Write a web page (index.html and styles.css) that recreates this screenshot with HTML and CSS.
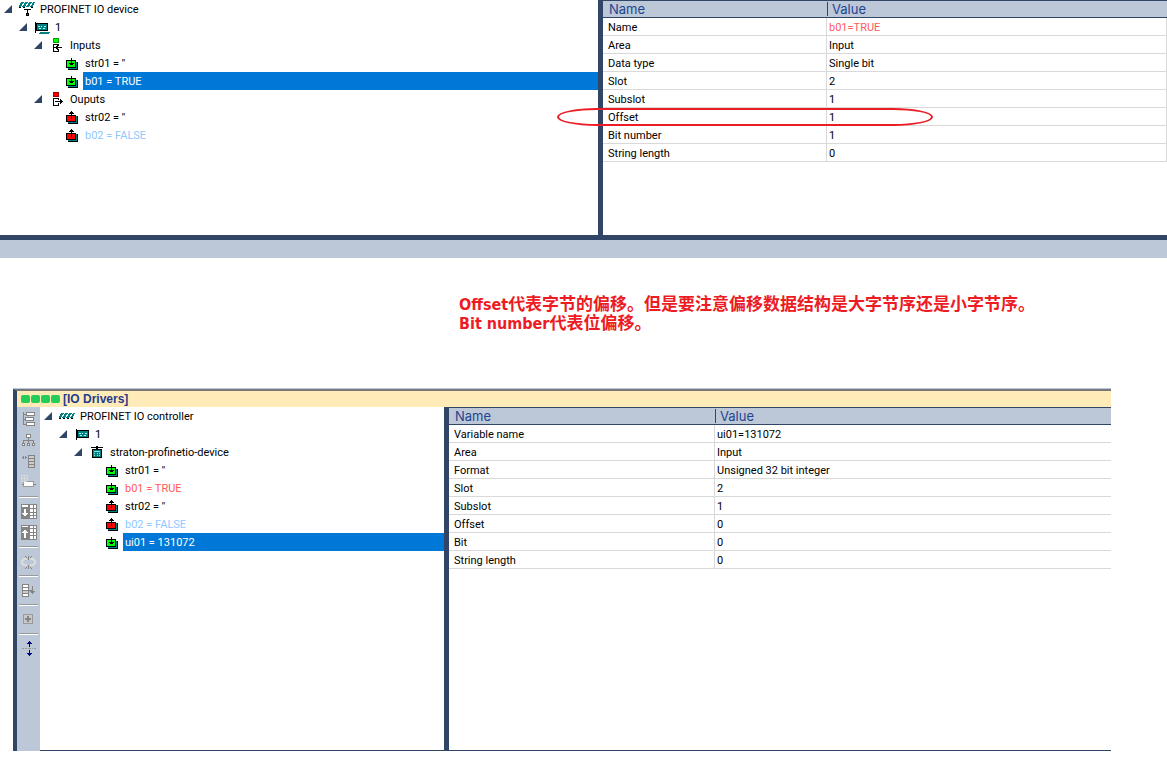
FILE: index.html
```html
<!DOCTYPE html>
<html lang="zh">
<head>
<meta charset="utf-8">
<title>IO Drivers</title>
<link rel="stylesheet" href="styles.css">
</head>
<body>
<svg class="defs" aria-hidden="true">
  <symbol id="i-in" viewBox="0 0 16 16">
    <path fill="#000" d="M4 7h10v8H4z"/><path fill="#008080" d="M4 7h9v7H4z"/>
    <path fill="#000" d="M2 5h10v8H2z"/><path fill="#00ff00" d="M3 6h8v6H3z"/>
    <path fill="#000" d="M7 3h1v7H7zM5 8h5v1H5zM6 9h3v1H6z"/>
  </symbol>
  <symbol id="i-out" viewBox="0 0 16 16">
    <path fill="#000" d="M4 7h10v8H4z"/><path fill="#008080" d="M4 7h9v7H4z"/>
    <path fill="#000" d="M2 6h10v7H2z"/><path fill="#ff0000" d="M3 7h8v5H3z"/>
    <path fill="#000" d="M7 2h1v8H7zM6 3h3v1H6zM5 4h5v1H5z"/>
  </symbol>
  <symbol id="i-net" viewBox="0 0 16 16">
    <path fill="#008080" d="M2 5h14v1h-1v2h-1v2H0V8h1V6h1z"/>
    <path stroke="#fff" d="M2.500 10l3-5M6.500 10l3-5M10.500 10l3-5"/>
    <path fill="#000" d="M0 10h2v1H0zM4 10h2v1H4zM8 10h2v1H8zM12 10h2v1h-2z"/>
  </symbol>
  <symbol id="i-netdev" viewBox="0 0 16 16">
    <path fill="#008080" d="M2 1h14v1h-1v2h-1v2H0V4h1V2h1z"/>
    <path stroke="#fff" d="M2.500 6l3-5M6.500 6l3-5M10.500 6l3-5"/>
    <path fill="#000" d="M0 6h2v1H0zM4 6h2v1H4zM12 6h2v1h-2zM5 8h7v1H5zM8 9h1v3H8zM7 12h3v3H7z"/><path fill="#008080" d="M8 13h1v1H8z"/>
  </symbol>
  <symbol id="i-rack" viewBox="0 0 16 16">
    <path fill="#000" d="M2 3h1v11H2zM3 4h12v8H3z"/><path fill="#008080" d="M4 5h10v6H4z"/>
    <path fill="#9ff" d="M5 7h2v1H5zM8 7h1v1H8zM11 7h2v1h-2zM6 9h2v1H6zM10 9h2v1h-2z"/>
  </symbol>
  <symbol id="i-rackdev" viewBox="0 0 16 16">
    <path fill="#000" d="M1 3h1v11H1zM2 4h12v8H2z"/><path fill="#008080" d="M3 5h10v6H3zM6 13h10v1H6zM5 14h10v1H5z"/>
    <path fill="#9ff" d="M4 7h2v1H4zM7 7h1v1H7zM10 7h2v1h-2zM5 9h2v1H5zM9 9h2v1H9z"/>
  </symbol>
  <symbol id="i-inputs" viewBox="0 0 16 16">
    <path fill="#00a000" d="M4 1h6v5H4z"/><path fill="#00ff00" d="M5 2h4v3H5z"/>
    <path fill="#000" d="M4 7h6v1H5v6h4v-2h1v3H4zM9 7h1v2H9zM5 10h2v1H5zM6 10h7v1H6zM7 9h1v3H7zM8 8h1v5H8z"/>
  </symbol>
  <symbol id="i-outputs" viewBox="0 0 16 16">
    <path fill="#a00000" d="M4 1h6v5H4z"/><path fill="#ff0000" d="M5 2h4v3H5z"/>
    <path fill="#000" d="M4 7h6v1H5v6h4v-2h1v3H4zM9 7h1v2H9zM6 10h8v1H6zM12 9h1v3h-1zM11 8h1v5h-1z"/>
  </symbol>
  <symbol id="i-unit" viewBox="0 0 16 16">
    <path fill="#000" d="M2 3h12v1H2zM7 2h2v3H7zM3 5h10v9H3z"/><path fill="#008080" d="M4 6h8v7H4z"/>
    <path fill="#7fe5e5" d="M5 7h6v1H5zM5 9h1v1H5zM8 9h1v1H8zM10 9h1v1h-1zM5 11h1v1H5zM8 11h1v1H8zM10 11h1v1h-1z"/>
  </symbol>
</svg>

<section class="device">
  <ul class="tree" role="tree" aria-label="PROFINET IO device">
    <li>
      <div class="node"><button class="toggle" aria-label="Collapse"></button><svg class="ico"><use href="#i-netdev"/></svg><span class="label">PROFINET IO device</span></div>
      <ul>
        <li>
          <div class="node"><button class="toggle" aria-label="Collapse"></button><svg class="ico"><use href="#i-rackdev"/></svg><span class="label">1</span></div>
          <ul>
            <li>
              <div class="node"><button class="toggle" aria-label="Collapse"></button><svg class="ico"><use href="#i-inputs"/></svg><span class="label">Inputs</span></div>
              <ul>
                <li class="node leaf"><svg class="ico"><use href="#i-in"/></svg><span class="label">str01 = ''</span></li>
                <li class="node leaf"><svg class="ico"><use href="#i-in"/></svg><span class="label selected">b01 = TRUE</span></li>
              </ul>
            </li>
            <li>
              <div class="node"><button class="toggle" aria-label="Collapse"></button><svg class="ico"><use href="#i-outputs"/></svg><span class="label">Ouputs</span></div>
              <ul>
                <li class="node leaf"><svg class="ico"><use href="#i-out"/></svg><span class="label">str02 = ''</span></li>
                <li class="node leaf"><svg class="ico"><use href="#i-out"/></svg><span class="label false">b02 = FALSE</span></li>
              </ul>
            </li>
          </ul>
        </li>
      </ul>
    </li>
  </ul>
  <div class="props">
    <table>
      <colgroup><col class="key-col"><col></colgroup>
      <thead><tr><th>Name</th><th>Value</th></tr></thead>
      <tbody>
        <tr><td>Name</td><td class="true">b01=TRUE</td></tr>
        <tr><td>Area</td><td>Input</td></tr>
        <tr><td>Data type</td><td>Single bit</td></tr>
        <tr><td>Slot</td><td>2</td></tr>
        <tr><td>Subslot</td><td>1</td></tr>
        <tr><td>Offset</td><td>1</td></tr>
        <tr><td>Bit number</td><td>1</td></tr>
        <tr><td>String length</td><td>0</td></tr>
      </tbody>
    </table>
    <div class="ring"></div>
  </div>
</section>
<div class="strip"></div>

<p class="note"><span class="latin">Offset</span>代表字节的偏移。但是要注意偏移数据结构是大字节序还是小字节序。<br><span class="latin">Bit number</span>代表位偏移。</p>

<section class="drivers">
  <header class="title"><i class="dot"></i><i class="dot"></i><i class="dot"></i><i class="dot"></i><h1>[IO Drivers]</h1></header>
  <div class="body">
    <div class="toolbar" role="toolbar">
      <button aria-label="Insert master"><svg viewBox="0 0 17 17"><path fill="#848484" d="M3 1h1v13H3zM4 3h2v1H4zM4 8h2v1H4zM4 13h2v1H4z"/><path fill="#fff" stroke="#848484" d="M6.500 1.500h8v3h-8zM5.500 6.500h8v3h-8zM6.500 11.500h8v3h-8z"/></svg></button>
      <button aria-label="Insert network"><svg viewBox="0 0 17 17"><path fill="#848484" d="M8 6h1v5H8zM3 8h11v1H3zM3 8h1v3H3zM13 8h1v3h-1z"/><path fill="#fff" stroke="#848484" d="M6.500 2.500h4v3h-4zM2.500 11.500h2v2h-2zM7.500 11.500h2v2h-2zM12.500 11.500h2v2h-2z"/></svg></button>
      <button aria-label="Insert slot"><svg viewBox="0 0 17 17"><path fill="#848484" d="M2 4h2v1H2zM3 3h1v3H3zM5 3h1v3H5zM6 4h1v1H6zM8 2h7v13H8z"/><path fill="#ccc" d="M9 3h5v2H9zM9 6h5v2H9zM9 9h5v2H9zM9 12h5v2H9z"/></svg></button>
      <button aria-label="Insert variable"><svg viewBox="0 0 17 17"><path fill="#848484" d="M2 10h2v1H2zM14 10h2v1h-2z"/><path fill="#fff" stroke="#999" d="M3.500 7.500h10v5h-10z"/><path fill="none" stroke="#d8d8d8" d="M1 1.500h7M1 4.500h7M1 7.500h6M1.500 1v7M4.500 1v7M7.500 1v6"/></svg></button>
      <hr>
      <button aria-label="Import"><svg viewBox="0 0 17 17"><path fill="#848484" d="M1 1h16v15H1z"/><path fill="#fff" d="M2 2h6v2H2zM10 2h3v3h-3zM14 2h2v3h-2zM10 6h3v3h-3zM14 6h2v3h-2zM10 10h3v2h-3zM14 10h2v2h-2zM10 13h3v2h-3zM14 13h2v2h-2zM4 6h2v4h2l-3 4-3-4h2z"/></svg></button>
      <button aria-label="Export"><svg viewBox="0 0 17 17"><path fill="#848484" d="M1 1h16v15H1z"/><path fill="#fff" d="M2 2h6v1H2zM10 2h3v2h-3zM14 2h2v2h-2zM10 5h3v3h-3zM14 5h2v3h-2zM10 9h3v2h-3zM14 9h2v2h-2zM10 12h3v3h-3zM14 12h2v3h-2zM4 14V9H2l3-4 3 4H6v5z"/></svg></button>
      <hr>
      <button aria-label="Disconnect"><svg viewBox="0 0 17 17"><path fill="none" stroke="#dcdcdc" stroke-width="2" d="M7 6H4L2 8v2l2 2h3M10 6h3l2 2v2l-2 2h-3"/><path fill="#848484" d="M8 3h1v4H8zM8 12h1v4H8zM5 3h1v1H5zM6 4h1v1H6zM11 3h1v1h-1zM10 4h1v1h-1zM5 15h1v1H5zM6 14h1v1H6zM11 15h1v1h-1zM10 14h1v1h-1z"/></svg></button>
      <hr>
      <button aria-label="Sort"><svg viewBox="0 0 17 17"><path fill="#848484" d="M2 2h7v13H2zM9 8h3v1H9zM12 4h1v8h-1zM10 9h5v1h-5zM11 10h3v1h-3z"/><path fill="#fff" d="M3 3h5v2H3zM3 6h5v2H3zM3 12h5v2H3z"/><path fill="#ccc" d="M3 9h5v2H3z"/></svg></button>
      <hr>
      <button aria-label="Expand"><svg viewBox="0 0 17 17"><path fill="#c8c8c8" stroke="#999" d="M3.500 3.500h9v9h-9z"/><path fill="#848484" d="M7 5h2v6H7zM5 7h6v2H5z"/></svg></button>
      <hr>
      <button aria-label="Move"><svg viewBox="0 0 17 17"><path fill="#000080" d="M9 1h1v6H9zM8 2h3v1H8zM7 3h5v1H7zM9 10h1v6H9zM8 14h3v1H8zM7 13h5v1H7z"/><path fill="#999" d="M2 8h2v1H2zM5 8h2v1H5zM8 8h3v1H8zM12 8h1v1h-1zM14 8h2v1h-2z"/></svg></button>
    </div>
    <ul class="tree" role="tree" aria-label="PROFINET IO controller">
      <li>
        <div class="node"><button class="toggle" aria-label="Collapse"></button><svg class="ico"><use href="#i-net"/></svg><span class="label">PROFINET IO controller</span></div>
        <ul>
          <li>
            <div class="node"><button class="toggle" aria-label="Collapse"></button><svg class="ico"><use href="#i-rack"/></svg><span class="label">1</span></div>
            <ul>
              <li>
                <div class="node"><button class="toggle" aria-label="Collapse"></button><svg class="ico"><use href="#i-unit"/></svg><span class="label">straton-profinetio-device</span></div>
                <ul>
                  <li class="node leaf"><svg class="ico"><use href="#i-in"/></svg><span class="label">str01 = ''</span></li>
                  <li class="node leaf"><svg class="ico"><use href="#i-in"/></svg><span class="label true">b01 = TRUE</span></li>
                  <li class="node leaf"><svg class="ico"><use href="#i-out"/></svg><span class="label">str02 = ''</span></li>
                  <li class="node leaf"><svg class="ico"><use href="#i-out"/></svg><span class="label false">b02 = FALSE</span></li>
                  <li class="node leaf"><svg class="ico"><use href="#i-in"/></svg><span class="label selected">ui01 = 131072</span></li>
                </ul>
              </li>
            </ul>
          </li>
        </ul>
      </li>
    </ul>
    <div class="props">
      <table>
        <colgroup><col class="key-col"><col></colgroup>
        <thead><tr><th>Name</th><th>Value</th></tr></thead>
        <tbody>
          <tr><td>Variable name</td><td>ui01=131072</td></tr>
          <tr><td>Area</td><td>Input</td></tr>
          <tr><td>Format</td><td>Unsigned 32 bit integer</td></tr>
          <tr><td>Slot</td><td>2</td></tr>
          <tr><td>Subslot</td><td>1</td></tr>
          <tr><td>Offset</td><td>0</td></tr>
          <tr><td>Bit</td><td>0</td></tr>
          <tr><td>String length</td><td>0</td></tr>
        </tbody>
      </table>
    </div>
  </div>
</section>
</body>
</html>
```
FILE: styles.css
```css
* { box-sizing: border-box; }

:root {
  --navy: #314667;
  --bar: #bcc7d8;
  --line: #d9d9d9;
}

body {
  margin: 0;
  background: #fff;
  color: #000;
  font: 11px/18px Roboto, "Liberation Sans", sans-serif;
}

ul { margin: 0; padding: 0; list-style: none; }
button { margin: 0; padding: 0; border: 0; background: none; }
.defs { position: absolute; width: 0; height: 0; }
svg { display: block; shape-rendering: crispEdges; }

/* Trees */
.tree { min-width: 0; overflow: hidden; }
.tree ul { padding-left: 15px; }
.node { display: flex; align-items: center; height: 18px; }
.leaf { padding-left: 19px; }
.toggle { width: 19px; height: 18px; padding-left: 4px; }
.toggle::before {
  content: "";
  display: block;
  width: 8px;
  height: 8px;
  background: var(--navy);
  clip-path: polygon(100% 0, 100% 100%, 0 100%);
}
.ico { width: 16px; height: 16px; flex: none; }
.label {
  flex: 1;
  height: 18px;
  margin-left: 3px;
  padding-left: 2px;
  line-height: 20px;
  white-space: nowrap;
}
.selected { background: #0078d7; color: #fff; }
.true { color: #ff5a5a; }
.false { color: #8fc7ff; }

/* Property grids */
.props { border-left: 5px solid var(--navy); }
table { width: 100%; border-collapse: separate; border-spacing: 0; table-layout: fixed; }
th, td { height: 18px; padding: 1px 0 0 5px; text-align: left; white-space: nowrap; }
th {
  padding-left: 6px;
  background: var(--bar);
  border: solid var(--navy);
  border-width: 1px 0;
  color: #1c4591;
  font: 13px/15px Inter, "Liberation Sans", sans-serif;
}
th + th { background: linear-gradient(var(--navy), var(--navy)) 1px 1px / 1px 14px no-repeat var(--bar); }
td { padding-top: 3px; border-bottom: 1px solid var(--line); line-height: 14px; }
td + td { padding-left: 2px; border-left: 1px solid var(--line); }

/* Device window */
.device { display: grid; grid-template-columns: 598px 1fr; min-height: 235px; }
.device .props { position: relative; }
.device .key-col { width: 223px; }
.device td:last-child { border-right: 1px solid var(--line); }
.ring {
  position: absolute;
  top: 108px;
  left: -46px;
  width: 376px;
  height: 18px;
  border: 2px solid #ed1c24;
  border-radius: 40px / 9px;
}
.strip { height: 23px; border-top: 5px solid var(--navy); background: var(--bar); }

.note {
  margin: 35px 0 57px 459px;
  color: #ed1c24;
  font: bold 17px/19px "Noto Sans CJK SC", sans-serif;
}
.latin { font-family: "DejaVu Sans Condensed", "DejaVu Sans", sans-serif; font-size: 16px; line-height: 0; }

/* Drivers window */
.drivers { margin: 0 56px 21px 13px; border-top: 1px solid var(--bar); }
.title {
  display: flex;
  align-items: center;
  gap: 1px;
  height: 18px;
  padding-left: 4px;
  border-top: 2px solid #77787c;
  border-left: 4px solid var(--navy);
  background: #ffebb8;
}
.dot { width: 9px; height: 8px; border-radius: 2px; background: #24cd58; }
h1 { margin: 0 0 0 2px; color: #1f3c8c; font: bold 12px/16px "Liberation Sans", Arial, sans-serif; }
.body {
  display: grid;
  grid-template-columns: 27px 404px 1fr;
  min-height: 344px;
}
.body .tree, .body .props { border-bottom: 1px solid var(--navy); }
.body .key-col { width: 265px; }
.toolbar { padding-top: 2px; border-left: 4px solid var(--navy); background: var(--bar); }
.toolbar button { display: grid; place-items: center; width: 23px; height: 21px; }
.toolbar svg { width: 17px; height: 17px; }
hr {
  height: 2px;
  margin: 3px 2px;
  border: solid;
  border-width: 1px 0;
  border-color: #999 transparent #fff;
}
```
